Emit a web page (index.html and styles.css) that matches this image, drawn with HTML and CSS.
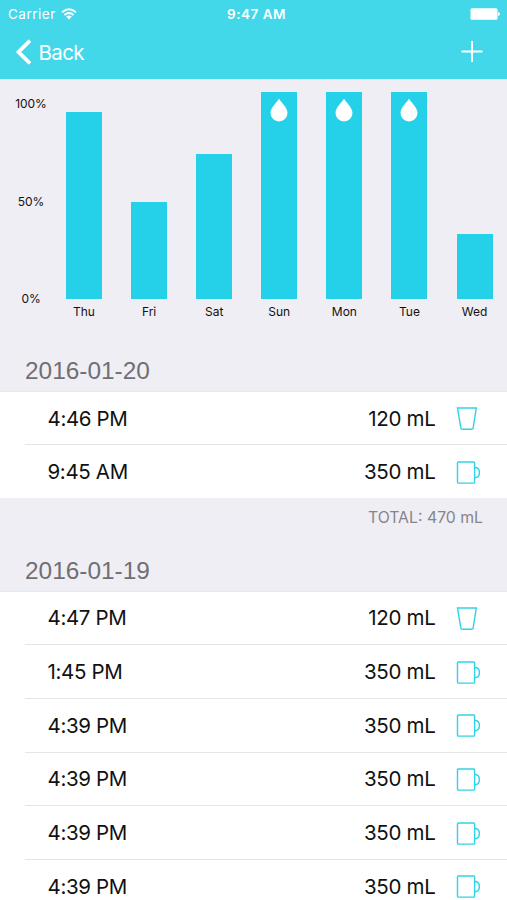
FILE: index.html
```html
<!DOCTYPE html>
<html>
<head>
	<meta charset="utf-8">
	<title>Water History</title>
	<link rel="stylesheet" href="styles.css">
</head>
<body>
	<svg width="0" height="0" class="defs">
		<symbol id="drop" viewBox="0 0 18 24"><path d="M9 0.5C10 3.6 17.5 9 17.5 15A8.5 8.5 0 0 1 0.5 15C0.5 9 8 3.6 9 0.5Z" fill="#fff"/></symbol>
		<symbol id="glass" viewBox="0 0 26 26"><path d="M1.5 2H20.3L17.1 22.2Q16.9 23.2 15.9 23.2H6.1Q5.1 23.2 4.9 22.2Z" fill="none" stroke="#2fd3e8" stroke-width="1.4"/></symbol>
		<symbol id="mug" viewBox="0 0 26 26"><path d="M2.3 2H17.8Q18.6 2 18.6 2.8V22.3Q18.6 23.1 17.8 23.1H2.3Q1.5 23.1 1.5 22.3V2.8Q1.5 2 2.3 2ZM18.6 7.2C21.6 7.4 23.4 9.8 23.4 12.6S21.6 17.8 18.6 18" fill="none" stroke="#2fd3e8" stroke-width="1.4"/></symbol>
	</svg>

	<header class="top">
		<div class="status">
			<div class="carrier">Carrier
				<svg width="16" height="12" viewBox="0 0 16 12" fill="none" stroke="#fff" stroke-width="1.8"><path d="M1 4.3Q8-1.9 15 4.3M3.4 7Q8 3 12.6 7"/><path d="M5.2 8.6Q8 6.3 10.8 8.6L8 11.5Z" fill="#fff" stroke="none"/></svg>
			</div>
			<div class="clock">9:47 AM</div>
			<svg class="battery" width="30" height="12" viewBox="0 0 30 12" fill="#fff"><rect x="0.5" y="0.3" width="27" height="11.4" rx="1.5"/><path d="M28 4Q30 4.3 30 6T28 8Z"/></svg>
		</div>
		<div class="nav">
			<a class="back">
				<svg width="16" height="26" viewBox="0 0 16 26"><path d="M15 1.5L3.5 13L15 24.5" fill="none" stroke="#fff" stroke-width="3.8"/></svg>
				<span>Back</span>
			</a>
			<svg width="22" height="22" viewBox="0 0 22 22"><path d="M11 0V21M0.5 10.5H21.5" stroke="#fff" stroke-width="2"/></svg>
		</div>
	</header>

	<div class="chart">
		<div class="axis"><span>100%</span><span>50%</span><span>0%</span></div>
		<div class="day"><div class="bar" style="height:187px"></div>Thu</div>
		<div class="day"><div class="bar" style="height:97px"></div>Fri</div>
		<div class="day"><div class="bar" style="height:145.5px"></div>Sat</div>
		<div class="day"><div class="bar" style="height:207.5px"><svg width="18" height="24"><use href="#drop"/></svg></div>Sun</div>
		<div class="day"><div class="bar" style="height:207.5px"><svg width="18" height="24"><use href="#drop"/></svg></div>Mon</div>
		<div class="day"><div class="bar" style="height:207.5px"><svg width="18" height="24"><use href="#drop"/></svg></div>Tue</div>
		<div class="day"><div class="bar" style="height:65px"></div>Wed</div>
	</div>

	<h2>2016-01-20</h2>
	<ul class="first">
		<li><span class="time">4:46 PM</span><span class="amount">120 mL</span><svg width="26" height="26"><use href="#glass"/></svg></li>
		<li><span class="time">9:45 AM</span><span class="amount">350 mL</span><svg width="26" height="26"><use href="#mug"/></svg></li>
	</ul>
	<p class="total">TOTAL: 470 mL</p>

	<h2>2016-01-19</h2>
	<ul>
		<li><span class="time">4:47 PM</span><span class="amount">120 mL</span><svg width="26" height="26"><use href="#glass"/></svg></li>
		<li><span class="time">1:45 PM</span><span class="amount">350 mL</span><svg width="26" height="26"><use href="#mug"/></svg></li>
		<li><span class="time">4:39 PM</span><span class="amount">350 mL</span><svg width="26" height="26"><use href="#mug"/></svg></li>
		<li><span class="time">4:39 PM</span><span class="amount">350 mL</span><svg width="26" height="26"><use href="#mug"/></svg></li>
		<li><span class="time">4:39 PM</span><span class="amount">350 mL</span><svg width="26" height="26"><use href="#mug"/></svg></li>
		<li><span class="time">4:39 PM</span><span class="amount">350 mL</span><svg width="26" height="26"><use href="#mug"/></svg></li>
	</ul>
</body>
</html>
```
FILE: styles.css
```css
* {
	box-sizing: border-box;
}
body {
	margin: 0;
	height: 900px;
	overflow: hidden;
	background: #efeef4;
	color: #111;
	font-family: Inter, "Liberation Sans", sans-serif;
}
svg {
	display: block;
	flex: none;
}
.defs {
	display: none;
}
.top {
	height: 79px;
	background: #43d7ea;
	color: #fff;
}
.status {
	display: grid;
	grid-template-columns: 1fr auto 1fr;
	align-items: center;
	height: 27px;
	padding: 0 7px 0 8px;
	font-size: 13.5px;
}
.carrier {
	display: flex;
	align-items: center;
	gap: 5px;
	letter-spacing: 0.5px;
}
.clock {
	font-weight: 600;
	font-size: 13.5px;
	letter-spacing: 0.5px;
	padding-left: 5px;
}
.battery {
	justify-self: end;
}
.nav {
	display: flex;
	justify-content: space-between;
	align-items: center;
	height: 50px;
	padding: 0 24px 0 15px;
}
.back {
	display: flex;
	align-items: center;
	gap: 7.5px;
	font-size: 20.5px;
	letter-spacing: -0.6px;
}
.chart {
	display: flex;
	align-items: flex-end;
	gap: 29px;
	height: 241px;
	font-size: 12px;
}
.axis {
	display: flex;
	flex-direction: column;
	justify-content: space-between;
	align-items: center;
	width: 62px;
	height: 209px;
	margin: 0 -25px 14px 0;
	line-height: 14px;
	letter-spacing: -0.1px;
}
.day {
	width: 36px;
	flex: none;
	text-align: center;
	line-height: 17px;
	white-space: nowrap;
}
.day + .day {
	margin-left: 0.1px;
}
.bar {
	background: #25d0e9;
	padding: 6px 9px;
	margin-bottom: 4px;
}
h2 {
	margin: 0;
	height: 71px;
	padding: 37px 25px 0;
	font: 24.4px/28px "Liberation Sans", sans-serif;
	color: #6f6f74;
}
ul {
	margin: 0;
	padding: 0;
	list-style: none;
	background: #fff;
	border-top: 1px solid #e8e8eb;
}
li {
	display: flex;
	align-items: center;
	height: 53.7px;
	margin-left: 25px;
	padding: 0 25px 0 22.5px;
	border-bottom: 1px solid #e5e5e8;
	font-size: 20.5px;
	letter-spacing: -0.35px;
}
li svg {
	margin-top: 2px;
}
.first li {
	height: 53px;
}
.first li:last-child {
	border-bottom: 0;
}
.time {
	flex: 1;
}
.amount {
	margin-right: 20.5px;
	letter-spacing: -0.3px;
}
.total {
	margin: 0;
	height: 21.5px;
	padding: 10px 24px 0;
	font-size: 15.8px;
	line-height: 19px;
	text-align: right;
	color: #85858a;
}
```
